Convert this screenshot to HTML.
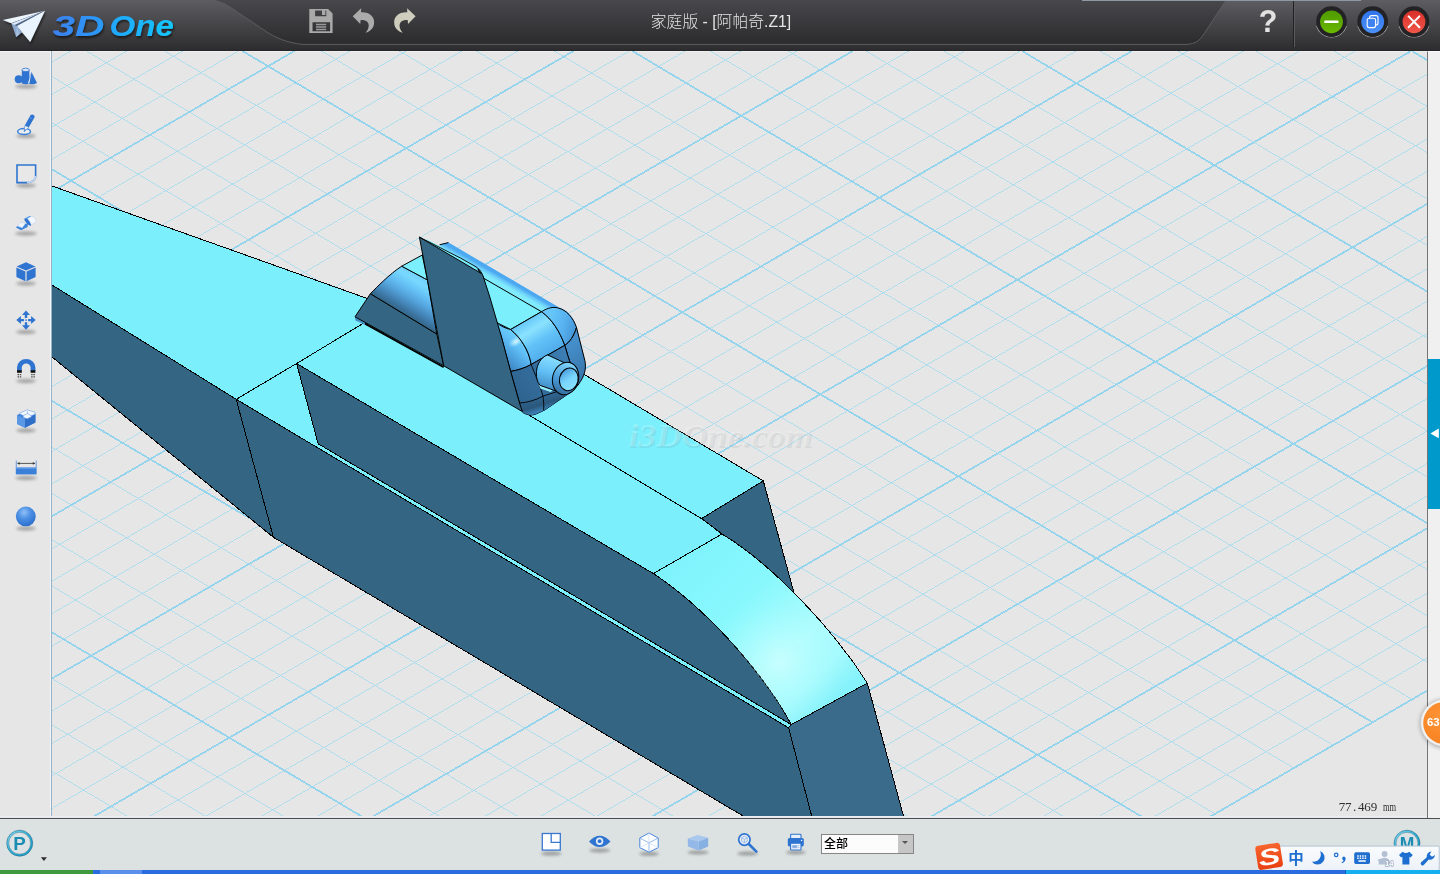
<!DOCTYPE html>
<html lang="zh-CN">
<head>
<meta charset="utf-8">
<title>3DOne 家庭版 - [阿帕奇.Z1]</title>
<style>
*{box-sizing:border-box;margin:0;padding:0}
html,body{width:1440px;height:874px;overflow:hidden;background:#e6e6e6;font-family:"Liberation Sans","Noto Sans CJK SC",sans-serif}
#app{position:relative;width:1440px;height:874px;overflow:hidden;background:#e6e6e6}
.abs{position:absolute}
/* title bar */
#titlebar{position:absolute;left:0;top:0;width:1440px;height:51px}
#title{will-change:transform;position:absolute;left:621px;top:12px;width:200px;text-align:center;color:#e4e4e4;font-size:15.8px;font-weight:300;line-height:20px;white-space:nowrap;font-family:"Liberation Sans","Noto Sans CJK SC",sans-serif}
#logo{position:absolute;left:51px;top:5px;font:italic bold 31px/40px "Liberation Sans",sans-serif;white-space:nowrap;transform-origin:0 50%;transform:scaleX(1.13)}
#help{will-change:transform;position:absolute;left:1257.5px;top:3px;width:20px;text-align:center;color:#e2e2e2;font:bold 30.5px/36px "Liberation Sans",sans-serif}
/* sidebar */
#sidebar{position:absolute;left:0;top:51px;width:52px;height:767px;background:#e6e6e6;border-right:1px solid #94b3c8;box-shadow:inset -1px 0 0 #f5f5f5}
/* viewport */
#view{position:absolute;left:0;top:0;width:1440px;height:874px}
/* right panel */
#rpanel{z-index:2;position:absolute;left:1427px;top:51px;width:13px;height:767px;background:#f0f0f0;border-left:1px solid #747474;border-top:1px solid #fafafa}
#rblue{z-index:3;position:absolute;left:1428px;top:359px;width:12px;height:150px;background:#0099cc}
/* bottom bar */
#bottombar{position:absolute;left:0;top:818px;width:1440px;height:52px;background:#dce1e1;border-top:1px solid #4e4e4e;box-shadow:0 -1px 0 #e4e7ec,0 -2px 0 #eceef2}
#topline{position:absolute;left:0;top:51px;width:51px;height:1px;background:#f4f4f4}
#taskbar{position:absolute;left:0;top:870px;width:1440px;height:4px;background:#2a6be0}
#tgreen{position:absolute;left:0;top:870px;width:93px;height:4px;background:#3f9a3f}
#sel{will-change:transform;position:absolute;left:821px;top:834px;width:93px;height:20px;background:#fcfcfc;border:1px solid #868686;font:500 12px/18px "Liberation Sans","Noto Sans CJK SC",sans-serif;color:#000;padding-left:2px}
#sel i{position:absolute;right:0;top:0;width:15.5px;height:18px;background:#c6c6c6}
#sel i:after{content:"";position:absolute;left:4.5px;top:6px;border:3px solid transparent;border-top:3.4px solid #555}
#tlight{position:absolute;left:100px;top:870px;width:42px;height:4px;background:#5a90ec}
#tright{position:absolute;left:1345px;top:870px;width:95px;height:4px;background:#14b0f0;border-left:1px solid #0d5fc0}
.l3d{background:linear-gradient(90deg,#3b82f0,#2b96f8);-webkit-background-clip:text;background-clip:text;color:transparent;padding-right:3px}
.lone{background:linear-gradient(90deg,#22a6fb,#14c8ff);-webkit-background-clip:text;background-clip:text;color:transparent;margin-left:4px;padding-right:3px}
#logo{filter:drop-shadow(1px 2px 1.5px rgba(0,0,0,.45))}
</style>
</head>
<body>
<div id="app">

<!-- ============ VIEWPORT (grid + model) ============ -->
<svg id="view" width="1440" height="874" viewBox="0 0 1440 874">
<defs>
<clipPath id="vclip"><rect x="52" y="51" width="1375" height="767"/></clipPath>
<linearGradient id="gRearL" gradientUnits="userSpaceOnUse" x1="688" y1="554" x2="829" y2="704">
<stop offset="0" stop-color="#7ff3fc"/><stop offset="0.35" stop-color="#88f8fd"/><stop offset="0.68" stop-color="#aefcfd"/><stop offset="0.86" stop-color="#a4fafd"/><stop offset="1" stop-color="#86f2fb"/>
</linearGradient>
<radialGradient id="gRear" gradientUnits="userSpaceOnUse" cx="780" cy="662" r="62">
<stop offset="0" stop-color="#d0ffff" stop-opacity="0.75"/><stop offset="0.5" stop-color="#c0ffff" stop-opacity="0.35"/><stop offset="1" stop-color="#b0ffff" stop-opacity="0"/>
</radialGradient>
<linearGradient id="gCurve" gradientUnits="userSpaceOnUse" x1="414" y1="273" x2="393" y2="307.5">
<stop offset="0" stop-color="#72d2fd"/><stop offset="0.15" stop-color="#78d8fe"/><stop offset="0.35" stop-color="#66c2f6"/><stop offset="0.55" stop-color="#56a8e0"/><stop offset="0.75" stop-color="#4688bc"/><stop offset="0.92" stop-color="#386e98"/><stop offset="1" stop-color="#346683"/>
</linearGradient>
<linearGradient id="gBody" gradientUnits="userSpaceOnUse" x1="500" y1="300" x2="585" y2="380">
<stop offset="0" stop-color="#62c0f6"/><stop offset="1" stop-color="#3f82b8"/>
</linearGradient>
<linearGradient id="gBand" gradientUnits="userSpaceOnUse" x1="509" y1="298.5" x2="516.5" y2="285.5">
<stop offset="0" stop-color="#7eeffc"/><stop offset="0.6" stop-color="#80eafc"/><stop offset="0.84" stop-color="#68c8f8"/><stop offset="1" stop-color="#4ca8f0"/>
</linearGradient>
<linearGradient id="gBoxTop" gradientUnits="userSpaceOnUse" x1="526" y1="320.5" x2="548" y2="355">
<stop offset="0" stop-color="#66c8fa"/><stop offset="0.28" stop-color="#8ae2fe"/><stop offset="0.6" stop-color="#62c2f8"/><stop offset="1" stop-color="#50acea"/>
</linearGradient>
<linearGradient id="gBoxFace" gradientUnits="userSpaceOnUse" x1="518" y1="395" x2="574" y2="358">
<stop offset="0" stop-color="#2f648f"/><stop offset="0.45" stop-color="#346e9e"/><stop offset="1" stop-color="#3d80b8"/>
</linearGradient>
<linearGradient id="gNoz" gradientUnits="userSpaceOnUse" x1="553" y1="358" x2="545" y2="390">
<stop offset="0" stop-color="#86dcff"/><stop offset="0.45" stop-color="#62c0f6"/><stop offset="1" stop-color="#3f86c0"/>
</linearGradient>
<linearGradient id="gRing" gradientUnits="userSpaceOnUse" x1="566" y1="363" x2="562" y2="394">
<stop offset="0" stop-color="#7fd4fb"/><stop offset="0.6" stop-color="#4a9ad8"/><stop offset="1" stop-color="#356fa0"/>
</linearGradient>
<linearGradient id="gHole" gradientUnits="userSpaceOnUse" x1="561" y1="372" x2="577" y2="386">
<stop offset="0" stop-color="#4a9cdc"/><stop offset="0.5" stop-color="#78d4fc"/><stop offset="1" stop-color="#8ae2fe"/>
</linearGradient>
<linearGradient id="gBody" gradientUnits="userSpaceOnUse" x1="500" y1="300" x2="585" y2="380">
<stop offset="0" stop-color="#62c0f6"/><stop offset="1" stop-color="#3f82b8"/>
</linearGradient>
<linearGradient id="gFilletL" gradientUnits="userSpaceOnUse" x1="526" y1="338" x2="503" y2="362">
<stop offset="0" stop-color="#74d4fd"/><stop offset="0.35" stop-color="#62c2f8"/><stop offset="0.75" stop-color="#4a9ddb"/><stop offset="1" stop-color="#3f86c0"/>
</linearGradient>
<radialGradient id="gGlow" cx="0.5" cy="0.5" r="0.5">
<stop offset="0" stop-color="#e2fbff" stop-opacity="0.95"/><stop offset="0.5" stop-color="#b4ecff" stop-opacity="0.6"/><stop offset="1" stop-color="#8adcff" stop-opacity="0"/>
</radialGradient>
<linearGradient id="gFilletR" gradientUnits="userSpaceOnUse" x1="550" y1="318" x2="578" y2="326">
<stop offset="0" stop-color="#66c6fa"/><stop offset="0.55" stop-color="#56b0ee"/><stop offset="1" stop-color="#4492d2"/>
</linearGradient>
<linearGradient id="gFaceR" gradientUnits="userSpaceOnUse" x1="566" y1="345" x2="586" y2="372">
<stop offset="0" stop-color="#4590cc"/><stop offset="1" stop-color="#3a78ae"/>
</linearGradient>
<linearGradient id="gFaceB" gradientUnits="userSpaceOnUse" x1="548" y1="392" x2="553" y2="408">
<stop offset="0" stop-color="#2c5a80" stop-opacity="0.2"/><stop offset="0.6" stop-color="#2a5578" stop-opacity="0.9"/><stop offset="1" stop-color="#3f86c0" stop-opacity="0.9"/>
</linearGradient>
</defs>
<g clip-path="url(#vclip)">
<rect x="52" y="51" width="1375" height="767" fill="#e6e6e6"/>
<rect x="52" y="51" width="1375" height="1" fill="#efefef"/>
<path d="M52.0 817.6L52.6 818.0M52.0 771.3L130.5 818.0M52.0 725.0L208.5 818.0M52.0 678.7L286.5 818.0M52.0 62.0L70.9 51.0M52.0 586.1L442.4 818.0M52.0 94.4L126.8 51.0M52.0 539.8L520.3 818.0M52.0 126.9L182.6 51.0M52.0 493.5L598.3 818.0M52.0 159.3L238.4 51.0M52.0 447.2L676.2 818.0M52.0 224.2L350.1 51.0M52.0 354.6L832.1 818.0M52.0 256.7L406.0 51.0M52.0 308.3L910.1 818.0M52.0 289.1L461.8 51.0M52.0 262.0L988.1 818.0M52.0 321.6L517.7 51.0M52.0 215.7L1066.0 818.0M52.0 386.5L629.3 51.0M52.0 123.0L1215.0 813.9M52.0 418.9L685.2 51.0M52.0 76.7L1254.4 791.0M52.0 451.3L741.0 51.0M86.6 51.0L1293.8 768.1M52.0 483.8L796.9 51.0M164.6 51.0L1333.2 745.2M52.0 548.7L908.5 51.0M320.5 51.0L1412.0 699.4M52.0 581.1L964.4 51.0M398.5 51.0L1427.0 662.0M52.0 613.6L1020.2 51.0M476.4 51.0L1427.0 615.7M52.0 646.0L1076.1 51.0M554.4 51.0L1427.0 569.4M52.0 710.9L1187.7 51.0M710.3 51.0L1427.0 476.7M52.0 743.4L1243.6 51.0M788.2 51.0L1427.0 430.4M52.0 775.8L1299.4 51.0M866.2 51.0L1427.0 384.1M52.0 808.3L1355.3 51.0M944.1 51.0L1427.0 337.8M146.9 818.0L1427.0 74.2M1100.1 51.0L1427.0 245.2M202.7 818.0L1427.0 106.6M1178.0 51.0L1427.0 198.9M258.6 818.0L1427.0 139.1M1256.0 51.0L1427.0 152.6M314.4 818.0L1427.0 171.5M1333.9 51.0L1427.0 106.3M426.1 818.0L1427.0 236.4M482.0 818.0L1427.0 268.9M537.8 818.0L1427.0 301.3M593.6 818.0L1427.0 333.8M705.3 818.0L1427.0 398.7M761.2 818.0L1427.0 431.1M817.0 818.0L1427.0 463.6M872.8 818.0L1427.0 496.0M984.5 818.0L1427.0 560.9M1040.4 818.0L1427.0 593.3M1096.2 818.0L1427.0 625.8M1152.0 818.0L1427.0 658.2" stroke="#a8dcee" stroke-width="0.9" fill="none" shape-rendering="crispEdges"/>
<path d="M52.0 632.4L364.4 818.0M52.0 191.8L294.3 51.0M52.0 400.9L754.2 818.0M52.0 354.0L573.5 51.0M52.0 169.4L1144.0 818.0M52.0 516.2L852.7 51.0M242.5 51.0L1372.6 722.3M52.0 678.5L1131.9 51.0M632.3 51.0L1427.0 523.1M91.1 818.0L1411.1 51.0M1022.1 51.0L1427.0 291.5M370.3 818.0L1427.0 204.0M1411.9 51.0L1427.0 60.0M649.5 818.0L1427.0 366.2M928.7 818.0L1427.0 528.4M1207.9 818.0L1427.0 690.7" stroke="#94d4ec" stroke-width="1.75" fill="none" shape-rendering="crispEdges"/>
<g id="model" stroke="#000" stroke-width="1" stroke-linejoin="round" shape-rendering="crispEdges">
<!-- front deck -->
<polygon points="52,186 366,298 400,310 365.2,323.4 236.2,399.3 52,285 40,280 40,186" fill="#7beffc"/>
<!-- front hull side -->
<polygon points="52,285 236.2,399.3 273.4,537.3 52,357 40,350 40,280" fill="#346683"/>
<!-- main hull side -->
<polygon points="236.2,399.3 788.6,727.8 812.2,818 746.5,818 273.4,537.3" fill="#346683"/>
<!-- step deck + sliver -->
<polygon points="236.2,399.3 296.6,363.5 318.1,443.7 791.3,724.6 788.6,727.8" fill="#7beffc"/>
<!-- block top -->
<polygon points="296.6,363.5 430.4,283 763.3,480.9 701.5,518.6 722,534 653.4,573.6" fill="#7beffc"/>
<!-- rear dark triangle -->
<path d="M763.3,480.9 L701.5,518.6 L722,534 L770,600 L802,622 Z" fill="#346683"/>
<!-- block near side -->
<path d="M296.6,363.5 L653.4,573.6 C703,606 762,670 791.3,724.6 L318.1,443.7 Z" fill="#346683"/>
<!-- curved rear top -->
<path d="M653.4,573.6 L722,534 C775,566 835,632 867.3,683.1 L791.3,724.6 C762,670 703,606 653.4,573.6 Z" fill="url(#gRearL)"/>
<path d="M653.4,573.6 L722,534 C775,566 835,632 867.3,683.1 L791.3,724.6 C762,670 703,606 653.4,573.6 Z" fill="url(#gRear)" stroke="none"/>
<!-- rear face -->
<polygon points="788.6,727.8 791.3,724.6 867.3,683.1 904,818 812.2,818" fill="#3a6b8b"/>
<!-- middle line on top -->
<line x1="520" y1="409.7" x2="701.5" y2="518.6"/>
</g>

<g id="cabin" stroke="#000" stroke-width="1" stroke-linejoin="round">
<!-- left quarter-cylinder part -->
<path d="M355,316.8 L355.4,320.4 L367,325.4 L368.6,322.4 Z" fill="#4690c8" stroke="none"/>
<path d="M355,316.8 L370.4,293.7 L436.8,334 L443.7,365.8 Z" fill="#346683"/>
<path d="M365,323.6 L443.7,367.2" fill="none" stroke-width="1.8"/>
<path d="M370.4,293.7 C377,287 389,274.5 401.7,266.2 L427.4,279.9 L436.8,334 Z" fill="url(#gCurve)"/>
<path d="M401.7,266.2 L422.3,255 L427.4,279.9 Z" fill="#7beffc"/>
<!-- right body silhouette (no outline on the top band) -->
<path d="M440,244.6 L448.4,242.6 L558.5,307.3 C566,309 574,317 576.5,327.5 L584.8,360.4 C586.5,368 585,376 577.9,385.1 C574,390 570,393 566.9,394.8 L544.9,409.9 L536,414 C531,416 526,414.5 523,412.6 L510,395 L470,300 Z" fill="url(#gBody)" stroke="none"/>
<!-- top rounded band -->
<path d="M425,238.5 L470,262 L482.4,274.3 L440,252 Z" fill="#7beffc" stroke="none"/>
<path d="M439.6,244.6 L448.4,242.6 L558.5,307.3 L541.5,311.7 L483.6,278.2 L482.4,274.3 L476,266.8 L460.4,258 L441,247.6 Z" fill="url(#gBand)" stroke="none"/>
<path d="M439.6,244.8 L448.4,242.6" fill="none"/>
<!-- flat cyan top -->
<path d="M478,269 L483.6,278.2 L541.5,311.7 L510.6,329.5 C504,326 499,324 496.2,322 L482,276 Z" fill="#7beffc"/>
<!-- rounded box: left fillet patch -->
<path d="M496.2,322 C500,326 506,328.5 510.6,329.5 C520,337 529,350 531.2,364.5 C525,368 517,370.5 510.6,371.4 L501,335.7 Z" fill="url(#gFilletL)"/>
<ellipse cx="516" cy="341.5" rx="8.5" ry="5" fill="url(#gGlow)" stroke="none" transform="rotate(-30 516 341.5)"/>
<!-- top face patch -->
<path d="M510.6,329.5 L541.5,311.7 C552,319 560,332 564.8,345.3 L531.2,364.5 C529,350 520,337 510.6,329.5 Z" fill="url(#gBoxTop)"/>
<!-- right fillet patch -->
<path d="M541.5,311.7 C548,307.5 554,306.5 558.7,308.2 C566,310 573,317 576.5,327.5 C574,336 570,342 564.8,345.3 C560,332 552,319 541.5,311.7 Z" fill="url(#gFilletR)"/>
<!-- front face patches -->
<path d="M564.8,345.3 C570,342 574,336 576.5,327.5 L584.8,360.4 C586.5,368 585,376 577.9,385.1 C574,373 568,358 564.8,345.3 Z" fill="url(#gFaceR)"/>
<path d="M510.6,371.4 C517,370.5 525,368 531.2,364.5 L564.8,345.3 C568,358 574,373 577.9,385.1 C574,390 570,393 566.9,394.8 L544.9,409.9 L536,414 C531,416 526,414.5 523,412.6 C521,410 520,406 519.5,403 Z" fill="url(#gBoxFace)"/>
<path d="M519.5,403 C528,402.5 536,400 542.9,396.1 L577.9,385.1 C574,390 570,393 566.9,394.8 L544.9,409.9 L536,414 C531,416 526,414.5 523,412.6 C521,410 520,406 519.5,403 Z" fill="url(#gFaceB)" stroke="none"/>
<path d="M531.2,364.5 C534,372 541,388 542.9,396.1 C543.6,401 544,406 543.6,410.4 M519.5,403 C528,402.5 536,400 542.9,396.1 L577.9,385.1" fill="none" stroke-width="0.9"/>
<!-- nozzle -->
<path d="M537.6,381.6 L554,389 L550.6,392 L540.4,388.4 Z" fill="#9af0fe" stroke="none"/>
<path d="M547.7,355 C543,356 538,362 536.8,369 C535.6,376 537,382 540.2,385.4 L556,391 L566,363.5 Z" fill="url(#gNoz)"/>
<ellipse cx="565.6" cy="378.5" rx="13" ry="16.4" fill="url(#gRing)" transform="rotate(14 565.6 378.5)"/>
<ellipse cx="568.8" cy="379.4" rx="9.3" ry="11.4" fill="url(#gHole)" transform="rotate(14 568.8 379.4)"/>
<!-- fin -->
<path d="M419.4,237.1 L481.2,273.4 Q482.6,274.2 483,275.8 L489.5,296 L501.1,335.7 L510.6,371.4 L519.5,403 L522.4,411.6 L443.7,365.8 Z" fill="#346683"/>
<path d="M419.4,237.1 L460.4,258 L476,266.8 Q480.5,269.5 482.4,274.3" fill="none" stroke-width="0.9"/>
</g>

<g id="watermark" font-family="Liberation Serif, serif" font-weight="bold" font-style="italic" font-size="31">
<text x="629.6" y="447.6" textLength="184" lengthAdjust="spacingAndGlyphs" fill="#6a7a80" fill-opacity="0.13">i3DOne.com</text>
<text x="628.4" y="446.4" textLength="184" lengthAdjust="spacingAndGlyphs" fill="#ffffff" fill-opacity="0.2">i3DOne.com</text>
</g>
</g>
</svg>

<!-- ============ TITLE BAR ============ -->
<svg id="titlebar" width="1440" height="51" viewBox="0 0 1440 51">
<defs>
<linearGradient id="tbA" x1="0" y1="0" x2="0" y2="1"><stop offset="0" stop-color="#5d5d62"/><stop offset="0.5" stop-color="#454548"/><stop offset="1" stop-color="#2c2c2e"/></linearGradient>
<linearGradient id="tbB" x1="0" y1="0" x2="0" y2="1"><stop offset="0" stop-color="#48484c"/><stop offset="1" stop-color="#2b2b2d"/></linearGradient>
<linearGradient id="lg3d" x1="0" y1="0" x2="1" y2="0"><stop offset="0" stop-color="#3b86f2"/><stop offset="0.5" stop-color="#22a4fb"/><stop offset="1" stop-color="#16c8ff"/></linearGradient>
</defs>
<rect x="0" y="0" width="1440" height="51" fill="url(#tbA)"/>
<path d="M213,0 C222,2 226,4.5 230,7.1 L265,30.8 C276,38 286,42.4 302,44.4 L1186,44.4 C1196,44 1200,40 1204,34 L1226,0 Z" fill="url(#tbB)"/>
<path d="M213,0 C222,2 226,4.5 230,7.1 L265,30.8 C276,38 286,42.4 302,44.4 L1186,44.4 C1196,44 1200,40 1204,34 L1226,0" fill="none" stroke="#5c5c60" stroke-width="1"/>
<rect x="0" y="50" width="1440" height="1" fill="#262628"/>
<rect x="1082" y="0" width="279" height="1" fill="#8c98a4"/>
<rect x="1293" y="1" width="1" height="46" fill="#222"/><rect x="1294" y="1" width="1" height="46" fill="#5a5a5e"/>
</svg>
<div id="title">家庭版 - [阿帕奇.Z1]</div>

<!-- ============ SIDEBAR / PANELS ============ -->
<div id="sidebar"></div>
<div id="rpanel"></div>
<div id="topline"></div>
<div id="rblue"></div>
<div id="bottombar"></div>
<div id="sel">全部<i></i></div>
<div id="taskbar"></div><div id="tgreen"></div><div id="tlight"></div><div id="tright"></div>
<div id="help">?</div>
<svg id="overlay" class="abs" style="left:0;top:0;will-change:transform;z-index:5" width="1440" height="874" viewBox="0 0 1440 874">
<defs>
<filter id="blur2" x="-20%" y="-200%" width="140%" height="500%"><feGaussianBlur stdDeviation="1.5"/></filter>
<filter id="blur3" x="-20%" y="-20%" width="140%" height="140%"><feGaussianBlur stdDeviation="2.2"/></filter>
<filter id="dshadow" x="-20%" y="-20%" width="150%" height="150%"><feGaussianBlur in="SourceAlpha" stdDeviation="1.2"/><feOffset dx="1" dy="1.6"/><feComponentTransfer><feFuncA type="linear" slope="0.55"/></feComponentTransfer><feMerge><feMergeNode/><feMergeNode in="SourceGraphic"/></feMerge></filter>
<linearGradient id="lgA" gradientUnits="userSpaceOnUse" x1="52" y1="0" x2="102" y2="0"><stop offset="0" stop-color="#3d80ee"/><stop offset="1" stop-color="#2a9af8"/></linearGradient>
<linearGradient id="lgB" gradientUnits="userSpaceOnUse" x1="105" y1="0" x2="175" y2="0"><stop offset="0" stop-color="#22a4fa"/><stop offset="1" stop-color="#14c8ff"/></linearGradient>
<radialGradient id="gSphere" cx="0.42" cy="0.3" r="0.75"><stop offset="0" stop-color="#8fc0f6"/><stop offset="0.45" stop-color="#4a8ee4"/><stop offset="1" stop-color="#2a6cc8"/></radialGradient>
<linearGradient id="gGreen" x1="0" y1="0" x2="0" y2="1"><stop offset="0" stop-color="#4f9a00"/><stop offset="1" stop-color="#6ab800"/></linearGradient>
<linearGradient id="gBlue" x1="0" y1="0" x2="0" y2="1"><stop offset="0" stop-color="#2f74ec"/><stop offset="1" stop-color="#4c90f8"/></linearGradient>
<linearGradient id="gRed" x1="0" y1="0" x2="0" y2="1"><stop offset="0" stop-color="#d83028"/><stop offset="1" stop-color="#f0564a"/></linearGradient>
<linearGradient id="gRingPM" x1="0" y1="0" x2="1" y2="1"><stop offset="0" stop-color="#7fdcf2"/><stop offset="0.5" stop-color="#2aaed6"/><stop offset="1" stop-color="#1d9cc6"/></linearGradient>
<linearGradient id="gIme" x1="0" y1="0" x2="0" y2="1"><stop offset="0" stop-color="#fafcfe"/><stop offset="1" stop-color="#edf2f8"/></linearGradient>
<linearGradient id="gSogou" x1="0" y1="0" x2="0" y2="1"><stop offset="0" stop-color="#f6642c"/><stop offset="1" stop-color="#ea3f12"/></linearGradient>
<radialGradient id="gOrange" cx="0.4" cy="0.35" r="0.8"><stop offset="0" stop-color="#ff9436"/><stop offset="1" stop-color="#f57e1e"/></radialGradient>
</defs>
<!-- ============ LOGO PLANE ============ -->
<g id="plane" filter="url(#dshadow)">
<path d="M45,10.8 L2.8,20.1 L11.3,23.2 Z" fill="#eef5fd"/>
<path d="M45,10.8 L11.3,23.2 L16.9,26.1 Z" fill="#4f6688"/>
<path d="M40,12.6 L11.6,23.4 L12.6,26 Z" fill="#dfeaf8"/>
<path d="M11.6,23.6 L16.1,37 L22.1,32.2 L16.9,26.1 Z" fill="#8eabcf"/>
<path d="M16.9,26.1 L16.1,37 L19,34.6 Z" fill="#a9c2e0"/>
<path d="M45,10.8 L16.9,26.1 L30.2,42 Z" fill="#e9f4fe"/>
</g>
<g id="logotext" filter="url(#dshadow)" font-family="Liberation Sans, sans-serif" font-weight="bold" font-style="italic" font-size="28.8">
<text x="52.4" y="36.4" textLength="52" lengthAdjust="spacingAndGlyphs" fill="url(#lgA)">3D</text>
<text x="109.6" y="36.4" textLength="64.4" lengthAdjust="spacingAndGlyphs" fill="url(#lgB)">One</text>
</g>
<!-- ============ SAVE / UNDO / REDO ============ -->
<g id="tbicons">
<path d="M309.3,8.9 L328,8.9 L332.6,13.6 L332.6,33 L309.3,33 Z M315.1,10.6 L315.1,16.2 L326.3,16.2 L326.3,10.6 L325.4,10.6 L325.4,15 L322,15 L322,10.6 Z M312.5,22.2 L312.5,31.3 L330.1,31.3 L330.1,22.2 Z" fill="#a9a9a9" fill-rule="evenodd"/>
<path d="M316,23.8 h10.2 v1.5 h-10.2z M316,26.3 h10.2 v1.5 h-10.2z M316,28.8 h10.2 v1.5 h-10.2z" fill="#9a9a9a"/>
<path d="M352.7,16.2 L361.2,8.2 L361,12.3 C370,12 374.5,17 374.1,22.7 C374,28 370,31.5 365.5,32.8 C368.6,29.5 369.8,25 367.6,22.2 C366,20.2 363,19.9 360.6,20 L360.3,24 Z" fill="#ababab"/>
<path d="M415.6,16.2 L407.1,8.2 L407.3,12.3 C398.3,12 393.8,17 394.2,22.7 C394.3,28 398.3,31.5 402.8,32.8 C399.7,29.5 398.5,25 400.7,22.2 C402.3,20.2 405.3,19.9 407.7,20 L408,24 Z" fill="#cfcdbe"/>
</g>
<!-- ============ WINDOW BUTTONS ============ -->
<g id="winbtn">
<g fill="none" stroke="#b4b4b6" stroke-width="1.1" opacity="0.9">
<path d="M1316.6,26 A15.6,15.6 0 0 0 1346.4,26"/><path d="M1357.8,26 A15.6,15.6 0 0 0 1387.6,26"/><path d="M1399.1,26 A15.6,15.6 0 0 0 1428.9,26"/>
</g>
<circle cx="1331.5" cy="21.6" r="15.3" fill="#232325"/><circle cx="1372.7" cy="21.6" r="15.3" fill="#232325"/><circle cx="1414" cy="21.6" r="15.3" fill="#232325"/>
<circle cx="1331.5" cy="21.8" r="11.4" fill="url(#gGreen)"/><circle cx="1372.7" cy="21.8" r="11.4" fill="url(#gBlue)"/><circle cx="1414" cy="21.8" r="11.4" fill="url(#gRed)"/>
<rect x="1324.3" y="20.5" width="14.2" height="2.6" rx="0.6" fill="#fff"/>
<rect x="1369.6" y="15.6" width="8.4" height="9.4" rx="2" fill="none" stroke="#fff" stroke-width="1.1"/>
<rect x="1367.2" y="18.2" width="8.4" height="9.4" rx="2" fill="#3e83f0" stroke="#fff" stroke-width="1.1"/>
<path d="M1408.6,16.4 L1419.4,27.2 M1419.4,16.4 L1408.6,27.2" stroke="#fff" stroke-width="2" stroke-linecap="round"/>
</g>
<!-- ============ SIDEBAR ICONS ============ -->
<g id="sideicons">
<g fill="#000" opacity="0.27" filter="url(#blur2)">
<ellipse cx="26" cy="86.5" rx="11" ry="2.2"/><ellipse cx="26" cy="136" rx="10" ry="2.2"/><ellipse cx="26" cy="185.5" rx="10" ry="2.2"/>
<ellipse cx="26" cy="233.5" rx="11" ry="2.2"/><ellipse cx="26" cy="283.5" rx="10" ry="2.2"/><ellipse cx="26" cy="332" rx="10" ry="2.2"/>
<ellipse cx="26" cy="381" rx="10" ry="2.2"/><ellipse cx="26" cy="430.5" rx="10" ry="2.2"/><ellipse cx="26" cy="478" rx="11" ry="2.2"/><ellipse cx="26" cy="528.5" rx="10" ry="2.2"/>
</g>
<!-- 1 primitives: sphere, cylinder, cone -->
<g fill="#2f74d0">
<circle cx="18.7" cy="79.3" r="4"/>
<path d="M21.8,70 L21.8,83.5 Q25.5,85 29.4,83.5 L29.4,70 Z"/>
<ellipse cx="25.6" cy="69.9" rx="3.7" ry="1.7" fill="#dbe8fa" stroke="#2f74d0" stroke-width="0.8"/>
<path d="M31.5,72 L37,83 Q33,85.2 27.5,83.5 Z"/>
<path d="M31.5,72.5 L29.3,83.6 L27.8,83.4 Z" fill="#e6eefc"/>
</g>
<!-- 2 sketch pencil -->
<g>
<ellipse cx="24.1" cy="131.5" rx="6.4" ry="3" fill="#e9ecf2" stroke="#3a80d8" stroke-width="1.5"/>
<path d="M24.8,125.6 L29,127 L24.1,131.6 Z" fill="#eef3fa" stroke="#3f7fcf" stroke-width="0.6"/>
<path d="M24.6,129.2 L26.1,129.7 L24.1,131.7 Z" fill="#2f6fc4"/>
<path d="M30.6,114.9 Q32.6,113.9 34.2,115.6 Q35,116.6 34.3,117.8 L29,127 L24.8,125.6 Z" fill="#2f74d0"/>
<path d="M30.2,117.6 L32.8,118.9" stroke="#9dbfee" stroke-width="0.7" stroke-dasharray="0.9 0.5" fill="none"/>
</g>
<!-- 3 sheet / sketch rect -->
<g>
<path d="M17,165 L35.6,165 L35.6,177 Q34,182 27.5,182.6 L17,182.6 Z" fill="#e8e8e8" stroke="#2f74d0" stroke-width="1.6" stroke-linejoin="miter"/>
<path d="M35.6,176 Q34.5,181.8 27,182.6" fill="none" stroke="#c5d6ee" stroke-width="1.8"/>
</g>
<!-- 4 feature (eraser-like) -->
<g>
<path d="M15.9,227.4 L17.7,225.9 L22.1,227.8 L25.4,223.4 L27.9,224.1 L27.6,227 L22.1,229.8 L21,230.3 Z" fill="#3f84dc"/>
<path d="M17.7,225.9 L21,222.3 L25.4,223.4 L22.1,227.8 Z" fill="#f4f8fd" stroke="#a9c6ee" stroke-width="0.5"/>
<path d="M24.3,218.5 L29.4,215.9 L31.6,216.4 L27.6,218.7 Z" fill="#5a9ce8"/>
<path d="M24.3,218.6 L27.6,218.6 L29.8,221.6 L31.2,224.8 L30.5,225.9 L27.2,224.1 L24.7,220.5 Z" fill="#2f74d0"/>
<path d="M27.6,218.6 L31.6,216.4 Q34,216.8 34.9,218.6 Q36.2,220.4 36,221.9 L31.2,224.8 Q30.8,222.6 29.8,221.6 Z" fill="#f4f8fd" stroke="#b4cdf0" stroke-width="0.5"/>
</g>
<!-- 5 cube -->
<g fill="#2f74d0">
<path d="M26,262.2 L35.4,266.4 L26,270.4 L16.6,266.4 Z"/>
<path d="M16.4,267.6 L25.4,271.5 L25.4,281.3 L16.4,277 Z"/>
<path d="M35.6,267.6 L26.6,271.5 L26.6,281.3 L35.6,277 Z"/>
</g>
<!-- 6 move -->
<g fill="#2f74d0">
<path d="M26,310.4 L30,315 L27.2,315 L27.2,318 L24.8,318 L24.8,315 L22,315 Z"/>
<path d="M26,329.8 L30,325.2 L27.2,325.2 L27.2,322.2 L24.8,322.2 L24.8,325.2 L22,325.2 Z"/>
<path d="M16.3,320.1 L20.9,316.1 L20.9,318.9 L23.9,318.9 L23.9,321.3 L20.9,321.3 L20.9,324.1 Z"/>
<path d="M35.7,320.1 L31.1,316.1 L31.1,318.9 L28.1,318.9 L28.1,321.3 L31.1,321.3 L31.1,324.1 Z"/>
<circle cx="26" cy="320.1" r="0.9"/>
</g>
<!-- 7 magnet -->
<g>
<path d="M17,371 L17,367.5 A9.2,8.4 0 0 1 35.4,367.5 L35.4,371 L30.6,371 L30.6,367.5 A4.4,4 0 0 0 21.8,367.5 L21.8,371 Z" fill="#2f74d0"/>
<rect x="17" y="370.2" width="4.8" height="2.6" fill="#111"/><rect x="30.6" y="370.2" width="4.8" height="2.6" fill="#111"/>
<path d="M17.6,374 h1.4 v1.3 h-1.4z M19.8,374 h1.4 v1.3 h-1.4z M17.6,376.2 h1.4 v1.3 h-1.4z M19.8,376.2 h1.4 v1.3 h-1.4z M31.2,374 h1.4 v1.3 h-1.4z M33.4,374 h1.4 v1.3 h-1.4z M31.2,376.2 h1.4 v1.3 h-1.4z M33.4,376.2 h1.4 v1.3 h-1.4z" fill="#444"/>
</g>
<!-- 8 special / cube stack -->
<g>
<path d="M17,415 L26.5,411.5 L35.4,414 L35.4,422.5 L25,427.8 L17,424 Z" fill="#3a7fd8"/>
<path d="M17,415 L25,418.6 L25,427.8 L17,424 Z" fill="#5a97e4"/>
<path d="M25,418.6 L35.4,414 L35.4,422.5 L25,427.8 Z" fill="#2f6fc8"/>
<path d="M19,413.6 L27,409.8 L35,412.2 L35,414.2 L31.2,415.8 L31.2,417 L27,418.8 L23.2,417.2 L23.2,415.6 Z" fill="#f2f6fd" stroke="#6b9fe6" stroke-width="0.6"/>
<path d="M23.2,415.6 L27.5,413.6 L31.2,415.8 M27.5,413.6 L27.5,411.4" stroke="#6b9fe6" stroke-width="0.6" fill="none"/>
</g>
<!-- 9 measure -->
<g>
<rect x="15.8" y="467.8" width="20.8" height="6.6" fill="#3a7fd8"/>
<rect x="15.8" y="467.2" width="20.8" height="1.4" fill="#6ea4ea"/>
<rect x="15.8" y="460.6" width="0.9" height="7" fill="#5a8fd8"/><rect x="35.7" y="460.6" width="0.9" height="7" fill="#5a8fd8"/>
<path d="M17.6,463.4 L34.8,463.4" stroke="#333" stroke-width="0.8"/>
<path d="M17.2,463.4 L19.6,462.1 L19.6,464.7 Z M35.2,463.4 L32.8,462.1 L32.8,464.7 Z" fill="#333"/>
</g>
<!-- 10 sphere -->
<circle cx="25.8" cy="516.4" r="9.9" fill="url(#gSphere)"/>
</g>
<!-- ============ BOTTOM TOOLBAR ICONS ============ -->
<g id="boticons">
<g fill="#000" opacity="0.3" filter="url(#blur2)">
<ellipse cx="551.3" cy="853.6" rx="10.5" ry="2"/><ellipse cx="599.8" cy="850.4" rx="10.5" ry="2"/><ellipse cx="649" cy="853.8" rx="10" ry="2"/>
<ellipse cx="698" cy="852.4" rx="10.5" ry="2"/><ellipse cx="747.4" cy="853.6" rx="10.5" ry="2"/><ellipse cx="795.8" cy="852.4" rx="10" ry="2"/>
</g>
<!-- layout -->
<rect x="542.3" y="833.5" width="18" height="16.6" fill="#fff" stroke="#3a78d0" stroke-width="1.3"/>
<path d="M551.2,833.5 L551.2,842.4 L560.3,842.4" fill="none" stroke="#3a78d0" stroke-width="1.3"/>
<!-- eye -->
<path d="M589,841.4 Q599.7,830.2 610.5,841.4 Q599.7,852.6 589,841.4 Z" fill="#2f74d0"/>
<circle cx="599.6" cy="841.2" r="3.7" fill="#e4ecf6"/><circle cx="599.6" cy="841.2" r="1.9" fill="#2f74d0"/>
<!-- wire cube -->
<path d="M649,833 L658.2,838 L658.2,847.6 L649,852.2 L639.8,847.6 L639.8,838 Z" fill="#fdfeff" stroke="#4a86dc" stroke-width="1"/>
<path d="M639.8,838 L649,842.8 L658.2,838 M649,842.8 L649,852.2" fill="none" stroke="#8fb4ea" stroke-width="0.9"/>
<path d="M649,833 L649,842.8 M639.8,847.6 L649,842.8 L658.2,847.6" fill="none" stroke="#c8dbf5" stroke-width="0.7"/>
<!-- solid cube -->
<path d="M687.8,838.6 L697.5,835 L708.2,837.8 L698.6,841.6 Z" fill="#a8c8ee"/>
<path d="M687.8,838.6 L698.6,841.6 L698.6,850.4 L687.8,846.6 Z" fill="#94b9e8"/>
<path d="M698.6,841.6 L708.2,837.8 L708.2,846.4 L698.6,850.4 Z" fill="#86afe2"/>
<!-- magnifier -->
<circle cx="744.4" cy="839.6" r="5.7" fill="#e9eff8" stroke="#2f74d0" stroke-width="1.7"/>
<path d="M744.4,836.2 L747.2,837.7 L747.2,841.2 L744.4,842.8 L741.6,841.2 L741.6,837.7 Z M741.6,837.7 L744.4,839.3 L747.2,837.7 M744.4,839.3 L744.4,842.8" fill="none" stroke="#7fa8e0" stroke-width="0.7"/>
<path d="M748.8,844 L756.4,851.6" stroke="#2f74d0" stroke-width="2.6" stroke-linecap="round"/>
<!-- printer -->
<rect x="790.6" y="834.2" width="10.4" height="4.4" rx="0.8" fill="#e9eff8" stroke="#2f74d0" stroke-width="1.1"/>
<rect x="787.8" y="838" width="16" height="8.4" rx="1.6" fill="#2f74d0"/>
<rect x="790.6" y="843.2" width="10.4" height="6.8" rx="0.6" fill="#eef3fb" stroke="#2f74d0" stroke-width="1.1"/>
<path d="M792.6,845.6 h4.2 v2.2 h-4.2z M797.6,845.6 h1.8 M797.6,847.4 h1.8" fill="#7fa8e0" stroke="#7fa8e0" stroke-width="0.6"/>
<circle cx="801.6" cy="840.4" r="0.7" fill="#fff"/>
</g>
<!-- ============ P / M BUTTONS ============ -->
<g id="pm">
<circle cx="19.7" cy="843.2" r="12" fill="#dde3e4" stroke="url(#gRingPM)" stroke-width="2"/>
<circle cx="19.7" cy="843.2" r="13" fill="none" stroke="#1f5f7c" stroke-width="0.6" opacity="0.9"/>
<circle cx="19.7" cy="843.2" r="10.9" fill="none" stroke="#1f5f7c" stroke-width="0.5" opacity="0.8"/>
<text x="19.6" y="850" text-anchor="middle" font-family="Liberation Sans, sans-serif" font-weight="bold" font-size="18.8" fill="#1b8db3">P</text>
<path d="M40.9,857.2 L46.9,857.2 L43.9,860.9 Z" fill="#2b2b2b"/>
<circle cx="1407" cy="843.2" r="12" fill="#dde3e4" stroke="url(#gRingPM)" stroke-width="2"/>
<circle cx="1407" cy="843.2" r="13" fill="none" stroke="#1f5f7c" stroke-width="0.6" opacity="0.9"/>
<circle cx="1407" cy="843.2" r="10.9" fill="none" stroke="#1f5f7c" stroke-width="0.5" opacity="0.8"/>
<text x="1407" y="850" text-anchor="middle" font-family="Liberation Sans, sans-serif" font-weight="bold" font-size="17.5" fill="#1b8db3">M</text>
</g>
<!-- ============ IME BAR ============ -->
<g id="imebar">
<rect x="1272" y="846" width="167" height="24" fill="url(#gIme)"/>
<rect x="1272" y="845.6" width="167" height="1" fill="#b4c4d6"/>
<rect x="1438.6" y="846" width="1.4" height="24" fill="#c9d3de"/>
<g transform="rotate(-9 1269 856.4)">
<rect x="1256.6" y="844.2" width="25" height="24.4" rx="3.4" fill="url(#gSogou)"/>
<text x="1269.2" y="864.8" text-anchor="middle" font-family="Liberation Sans, sans-serif" font-weight="bold" font-style="italic" font-size="23" fill="#fff" transform="translate(1269.2 0) scale(1.42 1) translate(-1269.2 0)">S</text>
</g>
<text x="1296" y="864.4" text-anchor="middle" font-family="Liberation Sans, Noto Sans CJK SC, sans-serif" font-weight="bold" font-size="15.5" fill="#1e6fd0">中</text>
<path d="M1311.89,861.64 A7.0,7.0 0 1 0 1319.98,851.02 A7.4,7.4 0 0 1 1311.89,861.64 Z" fill="#1e6fd0"/>
<circle cx="1336.2" cy="854.9" r="1.7" fill="none" stroke="#1e6fd0" stroke-width="1.3"/>
<path d="M1343.6,856.4 a2,2 0 0 1 2,2 c0,2.4 -1.4,4 -3.6,4.8 l-0.5,-0.9 c1.2,-0.6 1.9,-1.3 2,-2.1 a2,2 0 0 1 0.1,-3.8z" fill="#1e6fd0"/>
<rect x="1354.2" y="852.3" width="15.8" height="11.8" rx="1.8" fill="#1e6fd0"/>
<path d="M1357.2,855.2 h1.5 v1.5 h-1.5z M1359.7,855.2 h1.5 v1.5 h-1.5z M1362.2,855.2 h1.5 v1.5 h-1.5z M1364.7,855.2 h1.5 v1.5 h-1.5z M1357.2,857.6 h1.5 v1.5 h-1.5z M1359.7,857.6 h1.5 v1.5 h-1.5z M1362.2,857.6 h1.5 v1.5 h-1.5z M1364.7,857.6 h1.5 v1.5 h-1.5z M1358.4,860.2 h7.4 v1.5 h-7.4z" fill="#fff"/>
<g fill="#b3bfd2">
<circle cx="1384.6" cy="854" r="2.9"/>
<path d="M1378.6,864.6 q0.4,-6.6 6,-6.8 q5.6,0.2 6,6.8 z"/>
<path d="M1378,859.6 l3.4,-1 l0,3.4 l-2.6,0.6z"/>
</g>
<text x="1389.2" y="865.8" text-anchor="middle" font-family="Liberation Sans, sans-serif" font-weight="bold" font-size="7.6" fill="#fff" stroke="#9fadc4" stroke-width="1.3" paint-order="stroke" stroke-linejoin="round">14</text>
<path d="M1402.6,851.8 L1399,855 L1401.2,857.6 L1402.4,856.8 L1402.4,864.6 L1409.4,864.6 L1409.4,856.8 L1410.6,857.6 L1412.8,855 L1409.2,851.8 Q1405.9,854.2 1402.6,851.8 Z" fill="#1e6fd0"/>
<path d="M1435,855 A4.8,4.8 0 0 1 1428.8,859.4 L1424,864.8 A1.9,1.9 0 0 1 1421.2,862.2 L1426.8,857.2 A4.8,4.8 0 0 1 1431.4,851.4 L1429.6,854.4 L1432,856.8 Z" fill="#1e6fd0"/>
</g>
<!-- ============ ORANGE BADGE ============ -->
<g id="badge">
<circle cx="1444.6" cy="723.6" r="24.6" fill="#000" opacity="0.28" filter="url(#blur3)"/>
<circle cx="1444.2" cy="723" r="23.4" fill="#f2f2f2" stroke="#d9d9d9" stroke-width="0.6"/>
<circle cx="1444.2" cy="723" r="21" fill="url(#gOrange)"/>
<text x="1426.9" y="726.2" font-family="Liberation Sans, sans-serif" font-weight="bold" font-size="11.4" fill="#fff">63</text>
</g>
<!-- measurement readout -->
<g id="mm" font-family="Liberation Serif, serif" font-size="13" fill="#2e2e2e">
<text y="810.9" x="1338.7 1345.1 1352.9 1357.9 1364.3 1370.7">77.469</text>
<text y="810.9" x="1383" textLength="13.2" lengthAdjust="spacingAndGlyphs">mm</text>
</g>
<!-- right panel arrow -->
<path d="M1430.4,433.4 L1438.8,428.6 L1438.8,438.2 Z" fill="#fff"/>

</svg>


</div>
</body>
</html>
